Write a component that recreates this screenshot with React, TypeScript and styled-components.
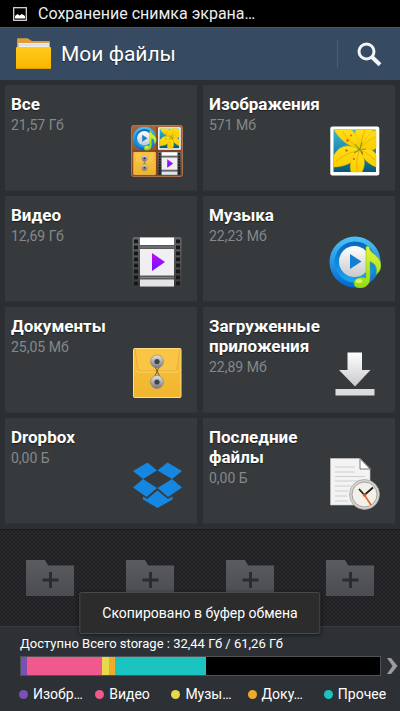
import React from "react";
import styled, { createGlobalStyle } from "styled-components";

const GlobalStyle = createGlobalStyle`
  *, *::before, *::after { box-sizing: border-box; }
  body {
    margin: 0;
    background: #2b2f32;
    font-family: Roboto, "Noto Sans", sans-serif;
    color: #fff;
  }
  button { font: inherit; color: inherit; border: 0; padding: 0; background: none; cursor: pointer; }
  svg { display: block; }
`;

const Screen = styled.div`
  position: relative;
  display: flex;
  flex-direction: column;
  min-height: 100vh;
`;

const StatusBar = styled.div`
  display: flex;
  align-items: center;
  gap: 11px;
  height: 27px;
  padding: 0 13px;
  background: #000;
  color: #ededed;
  font-size: 16px;
  line-height: 20px;
`;

const Header = styled.header`
  display: flex;
  align-items: center;
  height: 53px;
  padding: 0 0 0 15px;
  background: #364b61;
  border-top: 1px solid #3b5a70;
`;

const Title = styled.h1`
  flex: 1;
  margin: 0 0 0 9px;
  font-size: 21px;
  line-height: 28px;
  font-weight: 400;
  text-shadow: 0 1px 1px rgba(0, 0, 0, 0.5);
`;

const SearchButton = styled.button`
  display: flex;
  align-items: center;
  justify-content: center;
  width: 63px;
  height: 28px;
  border-left: 1px solid #4b5f73;
`;

const TileGrid = styled.main`
  display: grid;
  grid-template-columns: 1fr 1fr;
  gap: 5px 6px;
  padding: 5px;
  background: #2b2f32;
`;

const Tile = styled.button`
  display: flex;
  min-height: 106px;
  padding: 9px 14px 13px 6px;
  background: #363a3d;
  border-bottom: 1px solid #303437;
  text-align: left;
`;

const TileText = styled.span`
  display: flex;
  flex-direction: column;
  flex: 1;
  min-width: 0;
`;

const TileName = styled.span`
  font-size: 17px;
  line-height: 20px;
  font-weight: 700;
  text-shadow: 0 1px 1px rgba(0, 0, 0, 0.5);
`;

const TileSize = styled.span`
  font-size: 14px;
  line-height: 22px;
  color: #85888a;
`;

const TileIcon = styled.svg`
  flex: none;
  align-self: flex-end;
  width: 52px;
  height: 52px;
`;

const Dock = styled.nav`
  display: grid;
  grid-template-columns: repeat(4, 1fr);
  justify-items: center;
  align-items: center;
  height: 97px;
  border-top: 1px solid #1b1c1e;
  background-color: #2a292d;
  background-image: radial-gradient(circle, #1f1f22 1px, transparent 1px),
    radial-gradient(circle, #1f1f22 1px, transparent 1px);
  background-size: 4px 4px;
  background-position: 0 0, 2px 2px;
`;

const Storage = styled.footer`
  flex: 1;
  padding: 7px 0 7px 20px;
  background: #2d3135;
  border-top: 1px solid #383b40;
`;

const StorageText = styled.p`
  margin: 0 0 2px;
  font-size: 13px;
  line-height: 20px;
`;

const MeterRow = styled.div`
  display: flex;
  align-items: center;
  gap: 6px;
  padding-right: 2px;
`;

const Meter = styled.div`
  display: flex;
  flex: 1;
  height: 20px;
  border: 1px solid #505356;
  background: #000;
`;

const Segment = styled.div<{ $color: string }>`
  background: ${(p) => p.$color};
`;

const Legend = styled.ul`
  display: grid;
  grid-template-columns: repeat(5, 1fr);
  margin: 8px 0 0 -1px;
  padding: 0;
  list-style: none;
`;

const LegendItem = styled.li<{ $color: string }>`
  display: flex;
  align-items: center;
  gap: 5px;
  font-size: 14px;
  line-height: 20px;
  white-space: nowrap;

  &::before {
    content: "";
    flex: none;
    width: 9px;
    height: 9px;
    border-radius: 50%;
    background: ${(p) => p.$color};
  }
`;

const Toast = styled.div`
  position: absolute;
  left: 50%;
  bottom: 77px;
  transform: translateX(-50%);
  padding: 10px 22px;
  background: #2c2c2c;
  border: 1px solid #484848;
  border-radius: 2px;
  box-shadow: 0 1px 4px rgba(0, 0, 0, 0.5);
  font-size: 14px;
  line-height: 20px;
  white-space: nowrap;
`;

const HiddenDefs = styled.svg`
  position: absolute;
  width: 0;
  height: 0;
`;

const Gradient = ({ id, from, to }: { id: string; from: string; to: string }) => (
  <linearGradient id={id} x1="0" y1="0" x2="0" y2="1">
    <stop offset="0" stopColor={from} />
    <stop offset="1" stopColor={to} />
  </linearGradient>
);

const SharedDefs = () => (
  <HiddenDefs aria-hidden="true">
    <defs>
      <Gradient id="sky" from="#37b9dc" to="#075977" />
      <Gradient id="petal" from="#ffdf18" to="#f8ce00" />
      <Gradient id="ring" from="#4cc3f5" to="#0068cf" />
      <Gradient id="innerRing" from="#0868bd" to="#16a7f2" />
      <Gradient id="silver" from="#ffffff" to="#c9c9cb" />
      <Gradient id="note" from="#e2f43a" to="#94dc18" />
      <Gradient id="violet" from="#c50af5" to="#6a17ff" />
      <Gradient id="film" from="#69696b" to="#39393b" />
      <Gradient id="envelope" from="#fac43f" to="#f0b42e" />
      <Gradient id="metal" from="#e4e4e4" to="#777777" />
      <Gradient id="wood" from="#a8653c" to="#854523" />
      <Gradient id="slot" from="#5b5c60" to="#4b4c51" />
      <Gradient id="folder" from="#ffcb1c" to="#fbb500" />
    </defs>
  </HiddenDefs>
);

const Flower = () => (
  <g>
    <rect x="1.3" y="1.5" width="49" height="49" rx="2" fill="#fff" />
    <rect x="4.5" y="4.5" width="42.5" height="42.5" fill="url(#sky)" />
    <g fill="url(#petal)" stroke="#f0bd00" strokeWidth="0.5">
      <path d="M31 24C27 17 25 9 27 4.500h17C44 12 38 20 31 24z" />
      <path d="M31 24C35 15 40 8 47 5v18c-5 4-11 4-16 1z" />
      <path d="M30 24C19 21 10 14 5 4.500h17C28 9 31 17 30 24z" />
      <path d="M30 25C20 18 10 20 4.500 31v11C17 42 29 36 30 25z" />
      <path d="M31 25c7-3 12-1 16 4v13c-8-3-14-9-16-17z" />
      <path d="M30 25c-8 7-10 15-8 22h11c4-8 3-16-3-22z" />
    </g>
    <g fill="none" stroke="#f4a900" strokeWidth="0.9">
      <path d="M30 24C23 19 18 13 14 7M31 24c1-8 3-14 5-19M31 24c5-6 9-9 15-12M29 26c-8 1-15 5-22 10M30 26c-2 7-3 14-2 20M31 25c6 2 11 6 15 10" />
    </g>
    <path d="M30 24l-4-5M31 24l2-7M31 25l6-1M31 25l3 5M30 25l-5 3" stroke="#86a414" strokeWidth="1.2" />
    <g fill="#e2590b">
      <circle cx="18.500" cy="15.500" r="1.200" /><circle cx="22" cy="10.500" r="0.900" />
      <circle cx="17.500" cy="25.500" r="1.200" /><circle cx="25" cy="34" r="1" />
      <circle cx="33" cy="27.500" r="1" />
    </g>
  </g>
);

const Music = () => (
  <g>
    <circle cx="26" cy="26" r="25.500" fill="url(#ring)" />
    <circle cx="26" cy="26" r="20.500" fill="url(#innerRing)" />
    <circle cx="25.500" cy="25.500" r="15.500" fill="url(#silver)" />
    <path d="M21 18l11.500 7.500L21 33z" fill="#147fd0" />
    <path
      d="M37 10.500h3c1 8 12 9 12 19 0 4-2 7-5 9 2-7-1-11-6-13v17c0 5-3.500 9-9 9.500-4.500.3-7-1.500-7-4.500 0-4 4.500-6.500 9-6 1.200 0 2 .3 3 .7z"
      fill="url(#note)" stroke="#72b51a" strokeWidth="0.5"
    />
    <ellipse cx="30" cy="45" rx="3.500" ry="2" fill="#f0ff73" opacity="0.7" />
  </g>
);

const holes = [3.5, 9.5, 15.5, 21.5, 27.5, 33.5, 39.5, 45.5];

const Film = () => (
  <g>
    <rect x="1.500" y="1" width="49" height="50" rx="2" fill="url(#film)" />
    <rect x="9" y="1.500" width="34" height="49" fill="#59595b" />
    <rect x="9" y="1.500" width="34" height="7.500" fill="#fff" />
    <rect x="9" y="13" width="34" height="26.500" fill="#efeff1" />
    <rect x="9" y="43.500" width="34" height="7" fill="#e4e4e6" />
    <path d="M9 11h34M9 41.500h34" stroke="#8a8a8c" strokeWidth="0.8" />
    {holes.map((y) => (
      <g key={y} fill="#171719">
        <rect x="3" y={y} width="4" height="3.800" />
        <rect x="45" y={y} width="4" height="3.800" />
      </g>
    ))}
    <path d="M21 17l13 9-13 9z" fill="url(#violet)" />
  </g>
);

const Envelope = () => (
  <g>
    <rect x="2.500" y="1.500" width="47.500" height="49" rx="1" fill="url(#envelope)" stroke="#ffdf83" />
    <path d="M4 2l3 20.500q.3 1.500 2 1.500h35q1.500 0 2-1.500L49 2" fill="#fac544" stroke="#d9a536" strokeWidth="0.7" />
    <path d="M4.500 23q2 2 5 2h34q4 0 5-2" fill="none" stroke="#ffdc82" strokeWidth="0.7" />
    <path d="M24 20l4.500 9M28 20l-4 9" stroke="#6e5a2b" strokeWidth="1" />
    {[14.5, 35].map((y) => (
      <g key={y}>
        <circle cx="26" cy={y} r="6.500" fill="url(#metal)" stroke="#858078" strokeWidth="0.6" />
        <circle cx="26" cy={y} r="2.600" fill="#41454a" />
      </g>
    ))}
  </g>
);

const Everything = () => (
  <g>
    <rect x="0.500" y="0.500" width="51" height="51" rx="2" fill="url(#wood)" stroke="#bc8058" strokeWidth="0.8" />
    <path d="M26 2v48M2 26h48" stroke="#6e371b" strokeWidth="1" />
    <svg x="1.500" y="1.500" width="24" height="24" viewBox="0 0 52 52"><Music /></svg>
    <svg x="26.500" y="1.500" width="24" height="24" viewBox="0 0 52 52"><Flower /></svg>
    <svg x="1.500" y="26.500" width="24" height="24" viewBox="0 0 52 52"><Envelope /></svg>
    <svg x="26.500" y="26.500" width="24" height="24" viewBox="0 0 52 52"><Film /></svg>
  </g>
);

const Download = () => (
  <g fill="url(#silver)">
    <path d="M18.500 5.500h14.500V23h8.500L26 39.500 10 23h8.500z" />
    <rect x="6.500" y="42" width="39" height="6.500" fill="#dcdcde" />
  </g>
);

const Dropbox = () => (
  <g fill="#1687e0">
    <path d="M16.500 4.500L26 12.500 12 21 2 13z" />
    <path d="M36.500 4.500L51 13 41 21 26.500 12.500z" />
    <path d="M12 21l14 9-10.500 9L2 29.500z" />
    <path d="M41 21l10 8.500L37 39l-10.500-9z" />
    <path d="M26.500 32.500L37 41l4.500-2.500v3L26.500 50 12 41.500v-3l4 2.500z" />
  </g>
);

const Recent = () => (
  <g>
    <path d="M1.500 0.500H31l10 10V47H1.500z" fill="#f3f3f4" stroke="#c9c9ca" strokeWidth="0.6" />
    <path d="M31 .5v10.500h10z" fill="#fff" stroke="#66696b" strokeWidth="0.9" />
    <path d="M6 9h20M6 14h20M6 18.500h30M6 23h30M6 28h17M6 33h13M6 38h12M6 43h13" stroke="#cbcbcd" strokeWidth="0.9" />
    <circle cx="35.500" cy="36.500" r="15" fill="#d6d5d2" stroke="#a19f9c" strokeWidth="0.7" />
    <circle cx="35.500" cy="36.500" r="12.500" fill="#f3f0e9" stroke="#9b9894" strokeWidth="0.9" />
    <path d="M44 29.500l-8.500 7.500L30 31" fill="none" stroke="#1e1e1e" strokeWidth="1.8" />
    <path d="M35.500 37l6.500 10" stroke="#e1632e" strokeWidth="1.6" />
    <circle cx="35.500" cy="37" r="1.800" fill="#dc5523" />
  </g>
);

const tiles = [
  { name: "Все", size: "21,57 Гб", Icon: Everything },
  { name: "Изображения", size: "571 Мб", Icon: Flower },
  { name: "Видео", size: "12,69 Гб", Icon: Film },
  { name: "Музыка", size: "22,23 Мб", Icon: Music },
  { name: "Документы", size: "25,05 Мб", Icon: Envelope },
  { name: "Загруженные приложения", size: "22,89 Мб", Icon: Download },
  { name: "Dropbox", size: "0,00 Б", Icon: Dropbox },
  { name: "Последние файлы", size: "0,00 Б", Icon: Recent },
];

const usage = [
  { label: "Изобр…", color: "#7a50b5", share: 1.7 },
  { label: "Видео", color: "#f0588e", share: 20.8 },
  { label: "Музы…", color: "#e8d94b", share: 1.9 },
  { label: "Доку…", color: "#efab2c", share: 1.8 },
  { label: "Прочее", color: "#1cc4c1", share: 25.4 },
];

const shortcuts = [1, 2, 3, 4];

export default function App() {
  return (
    <Screen>
      <GlobalStyle />
      <SharedDefs />
      <StatusBar>
        <svg width="14" height="14" viewBox="0 0 14 14" aria-hidden="true">
          <rect x="0.700" y="0.700" width="12.600" height="12.600" fill="none" stroke="#e5e5e5" strokeWidth="1.2" />
          <path d="M2 11.500V9l2.500-2 2 1.500L9 7l3 2v2.500z" fill="#fff" />
        </svg>
        <span>Сохранение снимка экрана…</span>
      </StatusBar>
      <Header>
        <svg width="37" height="32" viewBox="0 0 37 32" aria-hidden="true">
          <path d="M2 1q0-.7 1-.7h9.500L17 3h17q1 0 1 1v8H2z" fill="#df9c3b" />
          <rect x="3.500" y="5" width="30.500" height="6" fill="#eeeef0" />
          <path d="M3.500 7h30.500" stroke="#c7c8cb" strokeWidth="0.7" />
          <path d="M1 10q0-1 1-1h33q1 0 1 1v20q0 1-1 1H2q-1 0-1-1z" fill="url(#folder)" />
          <path d="M1.500 30.500h34" stroke="#e09b00" />
        </svg>
        <Title>Мои файлы</Title>
        <SearchButton aria-label="Поиск">
          <svg width="25" height="25" viewBox="0 0 25 25" fill="none" stroke="#f2f4f6" aria-hidden="true">
            <circle cx="9.500" cy="9.500" r="7.500" strokeWidth="3" />
            <path d="M15 15l8 7.800" strokeWidth="4" />
          </svg>
        </SearchButton>
      </Header>
      <TileGrid>
        {tiles.map(({ name, size, Icon }) => (
          <Tile key={name}>
            <TileText>
              <TileName>{name}</TileName>
              <TileSize>{size}</TileSize>
            </TileText>
            <TileIcon viewBox="0 0 52 52" aria-hidden="true"><Icon /></TileIcon>
          </Tile>
        ))}
      </TileGrid>
      <Dock>
        {shortcuts.map((n) => (
          <button key={n} aria-label={`Добавить папку ${n}`}>
            <svg width="48" height="36" viewBox="0 0 48 36" aria-hidden="true">
              <path d="M0 0h19l3 5.500h26V36H0z" fill="url(#slot)" />
              <path d="M24.500 12v16M16.500 20h16" stroke="#2b2c30" strokeWidth="3" />
            </svg>
          </button>
        ))}
      </Dock>
      <Storage>
        <StorageText>Доступно Всего storage : 32,44 Гб / 61,26 Гб</StorageText>
        <MeterRow>
          <Meter>
            {usage.map((u) => (
              <Segment key={u.label} $color={u.color} style={{ width: `${u.share}%` }} />
            ))}
          </Meter>
          <button aria-label="Подробнее">
            <svg width="11" height="16" viewBox="0 0 11 16" aria-hidden="true">
              <path d="M0 0h4l6.500 8L4 16H0l5.500-8z" fill="#9a9c9e" />
            </svg>
          </button>
        </MeterRow>
        <Legend>
          {usage.map((u) => (
            <LegendItem key={u.label} $color={u.color}>{u.label}</LegendItem>
          ))}
        </Legend>
      </Storage>
      <Toast role="status">Скопировано в буфер обмена</Toast>
    </Screen>
  );
}
